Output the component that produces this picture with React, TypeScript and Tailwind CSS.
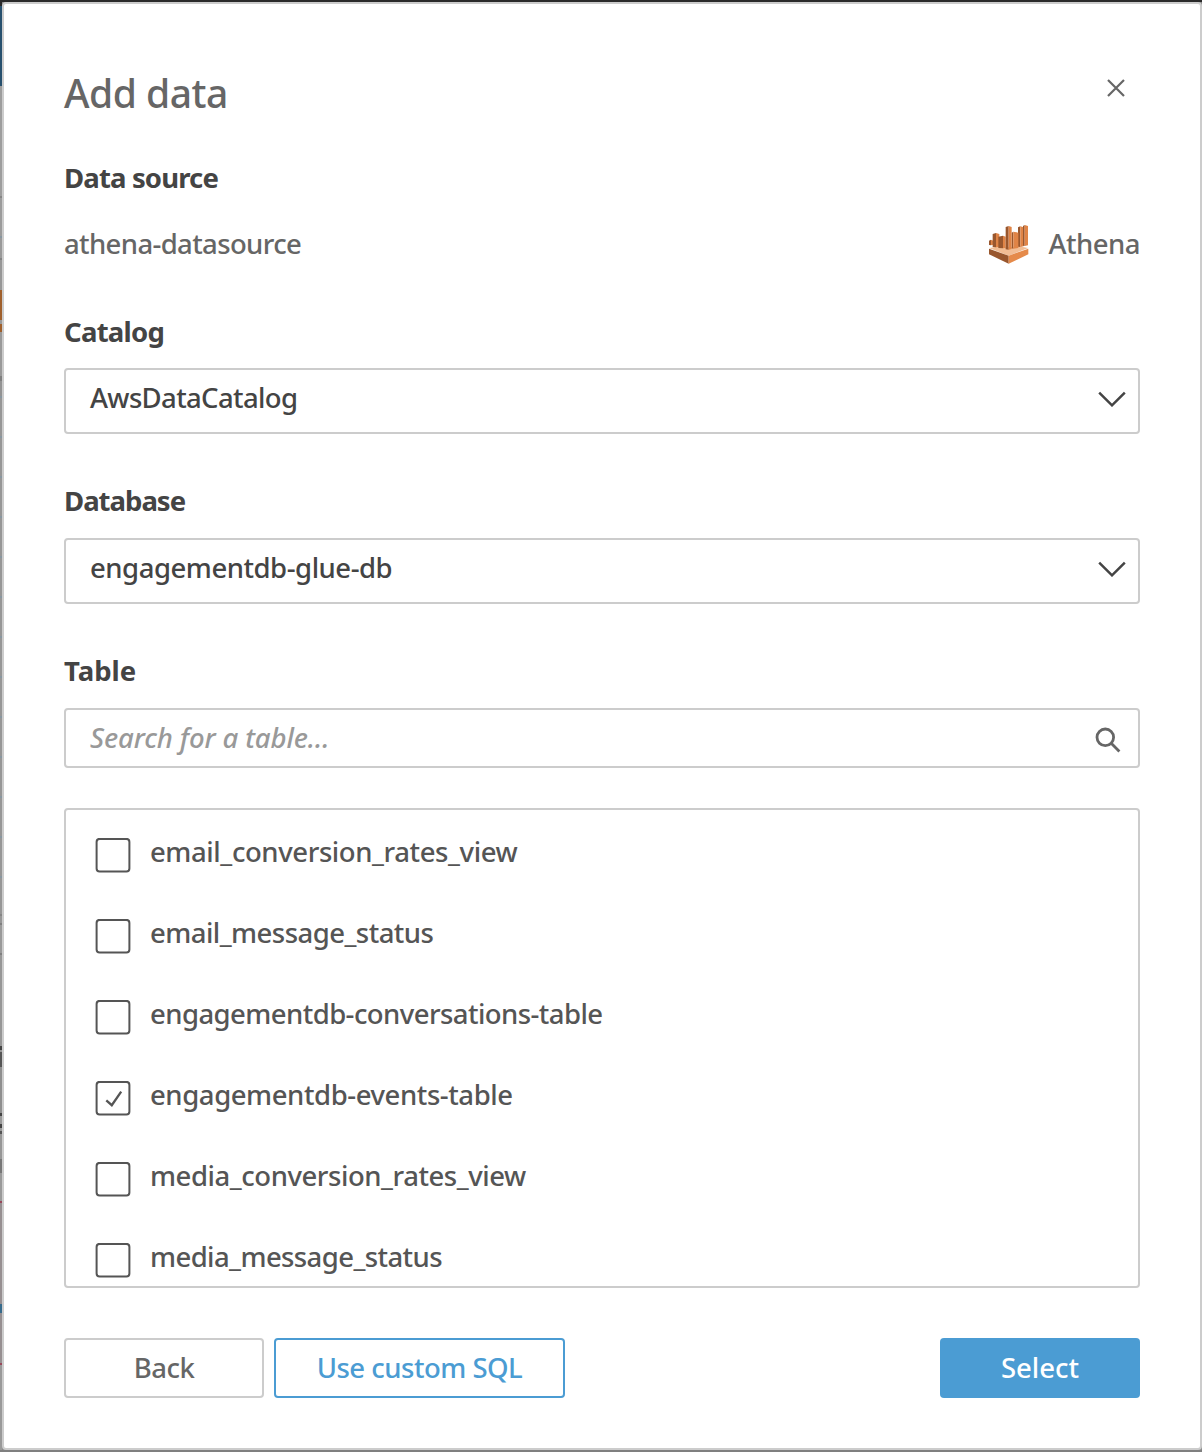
import type { ReactNode } from "react";

const tables = [
  { name: "email_conversion_rates_view", tracking: "tracking-[-0.41px]" },
  { name: "email_message_status", tracking: "tracking-[-0.54px]" },
  { name: "engagementdb-conversations-table", tracking: "tracking-[-0.56px]" },
  { name: "engagementdb-events-table", tracking: "tracking-[-0.42px]", checked: true },
  { name: "media_conversion_rates_view", tracking: "tracking-[-0.45px]" },
  { name: "media_message_status", tracking: "tracking-[-0.59px]" },
];

// Slivers of the page visible to the left of the dialog, from top to bottom
const pageEdge = [
  "h-[4px] bg-[#2a2a2a]", "h-[80px] bg-[#27506e]", "h-[110px] bg-[#9d9d9d]",
  "h-[2px] bg-[#858585]", "h-[38px] bg-[#9b9b9b]", "h-[2px] bg-[#8796a0]",
  "h-[20px] bg-[#999]", "h-[2px] bg-[#828282]", "h-[30px] bg-[#979797]",
  "h-[30px] bg-[#a0602c]", "h-[4px] bg-[#999]", "h-[8px] bg-[#a0602c]",
  "h-[44px] bg-[#999]", "h-[5px] bg-[#7f7f7f]", "h-[15px] bg-[#939393]",
  "h-[2px] bg-[#8796a0]", "h-[38px] bg-[#969696]", "h-[2px] bg-[#8796a0]",
  "h-[38px] bg-[#969696]", "h-[2px] bg-[#8796a0]", "h-[38px] bg-[#969696]",
  "h-[2px] bg-[#8796a0]", "h-[38px] bg-[#969696]", "h-[2px] bg-[#8796a0]",
  "h-[38px] bg-[#969696]", "h-[2px] bg-[#8796a0]",
  "h-[38px] bg-[#969696]", "h-[2px] bg-[#8796a0]",
  "h-[38px] bg-[#969696]", "h-[2px] bg-[#8796a0]",
  "h-[38px] bg-[#969696]", "h-[2px] bg-[#8796a0]",
  "h-[38px] bg-[#969696]", "h-[2px] bg-[#8796a0]",
  "h-[38px] bg-[#969696]", "h-[2px] bg-[#8796a0]",
  "h-[38px] bg-[#969696]", "h-[2px] bg-[#8796a0]",
  "h-[38px] bg-[#969696]", "h-[2px] bg-[#8796a0]",
  "h-[36px] bg-[#969696]", "h-[2px] bg-[#858585]", "h-[7px] bg-[#969696]",
  "h-[2px] bg-[#7f7f7f]", "h-[28px] bg-[#999]", "h-[2px] bg-[#7f7f7f]",
  "h-[91px] bg-[#969696]", "h-[4px] bg-[#444]", "h-[2px] bg-[#969696]",
  "h-[15px] bg-[#555]", "h-[46px] bg-[#8e8e8e]", "h-[3px] bg-[#444]",
  "h-[8px] bg-[#999]", "h-[4px] bg-[#444]", "h-[3px] bg-[#999]",
  "h-[3px] bg-[#555]", "h-[25px] bg-[#969696]", "h-[14px] bg-[#777]",
  "h-[28px] bg-[#999]", "h-[2px] bg-[#99485a]", "h-[101px] bg-[#968f91]",
  "h-[9px] bg-[#376b8c]", "h-[50px] bg-[#968f91]", "h-[2px] bg-[#99485a]",
  "grow bg-[#999]",
];

function Label({ children, className }: { children: ReactNode; className: string }) {
  return <h3 className={`h-10 leading-[42px] font-bold text-[#444] ${className}`}>{children}</h3>;
}

function Select({ value, className }: { value: string; className: string }) {
  return (
    <button className={`flex h-[66px] w-full shrink-0 items-center justify-between rounded-[4px] border-2 border-[#ccc] pr-3 pl-6 text-[#444] ${className}`}>
      <span className="pb-[6px] leading-10">{value}</span>
      <svg className="mb-1 h-4 w-7" viewBox="0 0 28 16" fill="none" stroke="#444" strokeWidth="2.5">
        <path d="M1.2 1.7 14 14.3 26.8 1.7" />
      </svg>
    </button>
  );
}

function AthenaIcon() {
  const bars = [
    [58, 91, 64, 71, 107], [69, 71, 79, 89, 113], [86, 79, 100, 108, 116],
    [145, 51, 152, 162, 112], [160, 47, 165, 175, 109], [126, 67, 131, 146, 117],
    [108, 50, 117, 126, 120],
  ];
  return (
    <svg className="h-[42px] w-[42px]" viewBox="55 40 126 126">
      <path d="M58 115 92 110 117 113 148 110 176 115 117 138Z" fill="#f2bd94" />
      <path d="M58 117 117 138V162L58 134Z" fill="#99572e" />
      <path d="M176 117 117 138V162L176 134Z" fill="#e58a4a" />
      {bars.map(([l, t, m, r, b]) => (
        <g key={l}>
          <path d={`M${l} ${t + 2} ${m} ${t - 1}V${b}L${l} ${b - 1}Z`} fill="#99572e" />
          <path d={`M${m} ${t - 1} ${r} ${t + 2}V${b - 2}L${m} ${b}Z`} fill="#e08446" />
        </g>
      ))}
    </svg>
  );
}

export default function App() {
  return (
    <div className="flex h-[1452px] w-[1202px] flex-col overflow-hidden bg-[#8a8a8a] font-['Noto_Sans',sans-serif] text-[27.5px] font-medium whitespace-nowrap">
      <div className="h-[2px] shrink-0 bg-[#2a2a2a]" />
      <div className="flex h-[1448px] shrink-0">
        <div className="flex w-[2px] shrink-0 flex-col">
          {pageEdge.map((c, i) => <div key={i} className={c} />)}
        </div>
        <main className="flex grow flex-col rounded-[4px] border-2 border-[#ccc] bg-white px-[60px] pt-[58px]">
          <header className="flex h-[60px] items-start justify-between">
            <h2 className="text-[39px] leading-[62px] tracking-[-0.5px] text-[#666]">Add data</h2>
            <svg className="mt-[17px] mr-[15px] h-[18px] w-[18px]" viewBox="0 0 18 18" stroke="#666" strokeWidth="2.2">
              <path d="M1 1 17 17M17 1 1 17" />
            </svg>
          </header>

          <Label className="mt-[35px] tracking-[-0.85px]">Data source</Label>
          <div className="mt-[27px] flex h-10 items-center justify-between leading-[42px] text-[#666]">
            <span className="tracking-[-0.63px]">athena-datasource</span>
            <span className="flex items-center gap-[18px]">
              <AthenaIcon />
              <span className="tracking-[-0.5px]">Athena</span>
            </span>
          </div>

          <Label className="mt-[47px] tracking-[-0.75px]">Catalog</Label>
          <Select className="mt-[17px] tracking-[-0.65px]" value="AwsDataCatalog" />

          <Label className="mt-[46px] tracking-[-1px]">Database</Label>
          <Select className="mt-[18px] tracking-[-0.47px]" value="engagementdb-glue-db" />

          <Label className="mt-[46px] tracking-[0px]">Table</Label>
          <div className="mt-[18px] flex h-[60px] shrink-0 items-center justify-between rounded-[4px] border-2 border-[#ccc] pr-4 pl-6">
            <span className="leading-10 tracking-[-0.12px] text-[#999] italic">Search for a table...</span>
            <svg className="mt-1 h-7 w-7" viewBox="0 0 28 28" fill="none" stroke="#666" strokeWidth="2.8">
              <circle cx="11.3" cy="11.3" r="8.3" />
              <path d="M17.2 17.2 25.4 25.4" />
            </svg>
          </div>

          <ul className="mt-10 flex h-[480px] shrink-0 flex-col gap-[46px] overflow-hidden rounded-[4px] border-2 border-[#ccc] pt-[28px] pl-[29px] text-[#555]">
            {tables.map((t) => (
              <li key={t.name} className="flex h-[35px] shrink-0 items-center gap-[19px]">
                <svg className="h-[35px] w-9" viewBox="0 0 36 35" fill="none" stroke="#555" strokeWidth="2">
                  <rect x="1.6" y="0.9" width="32.8" height="32.6" rx="3" />
                  {t.checked && <path d="M11.3 19.3 16.8 24.2 26.2 10.7" strokeWidth="2.3" />}
                </svg>
                <span className={`mb-2 leading-10 ${t.tracking}`}>{t.name}</span>
              </li>
            ))}
          </ul>

          <footer className="mt-[50px] flex h-[60px] gap-[10px]">
            <button className="w-[200px] rounded-[4px] border-2 border-[#ccc] tracking-[-0.5px] text-[#666]">Back</button>
            <button className="w-[291px] rounded-[4px] border-2 border-[#4b9cd3] tracking-[-0.5px] text-[#4b9cd3]">Use custom SQL</button>
            <button className="ml-auto w-[200px] rounded-[4px] bg-[#4b9cd3] text-white">Select</button>
          </footer>
        </main>
      </div>
      <div className="h-[2px] shrink-0 bg-[#7f7f7f]" />
    </div>
  );
}
